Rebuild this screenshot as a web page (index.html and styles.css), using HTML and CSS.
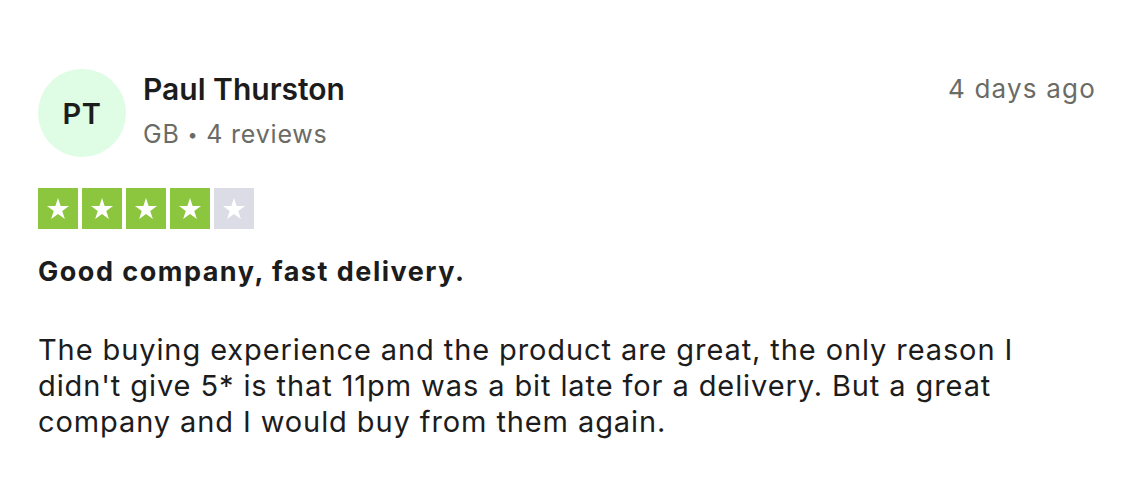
FILE: index.html
```html
<!DOCTYPE html>
<html lang="en">
<head>
<meta charset="utf-8">
<title>Review</title>
<link rel="stylesheet" href="styles.css">
</head>
<body>
<article class="review">
  <header class="review-header">
    <div class="consumer">
      <div class="avatar">PT</div>
      <div class="consumer-info">
        <div class="name">Paul Thurston</div>
        <div class="meta">GB <span class="dot">•</span> 4 reviews</div>
      </div>
    </div>
    <time class="date">4 days ago</time>
  </header>
  <div class="stars" aria-label="Rated 4 out of 5">
    <span class="star on"><svg viewBox="0 0 24 24"><path d="M12 3.2l2.1 6.4h6.7l-5.4 3.9 2.1 6.4-5.5-4-5.5 4 2.1-6.4-5.4-3.9h6.7z"/></svg></span>
    <span class="star on"><svg viewBox="0 0 24 24"><path d="M12 3.2l2.1 6.4h6.7l-5.4 3.9 2.1 6.4-5.5-4-5.5 4 2.1-6.4-5.4-3.9h6.7z"/></svg></span>
    <span class="star on"><svg viewBox="0 0 24 24"><path d="M12 3.2l2.1 6.4h6.7l-5.4 3.9 2.1 6.4-5.5-4-5.5 4 2.1-6.4-5.4-3.9h6.7z"/></svg></span>
    <span class="star on"><svg viewBox="0 0 24 24"><path d="M12 3.2l2.1 6.4h6.7l-5.4 3.9 2.1 6.4-5.5-4-5.5 4 2.1-6.4-5.4-3.9h6.7z"/></svg></span>
    <span class="star off"><svg viewBox="0 0 24 24"><path d="M12 3.2l2.1 6.4h6.7l-5.4 3.9 2.1 6.4-5.5-4-5.5 4 2.1-6.4-5.4-3.9h6.7z"/></svg></span>
  </div>
  <h2 class="title">Good company, fast delivery.</h2>
  <p class="text">The buying experience and the product are great, the only reason I didn't give 5* is that 11pm was a bit late for a delivery. But a great company and I would buy from them again.</p>
</article>
</body>
</html>
```

FILE: styles.css
```css
* { box-sizing: border-box; }
html, body { margin: 0; padding: 0; background: #ffffff; }
body {
  font-family: Inter, "Liberation Sans", sans-serif;
  color: #1c1c1c;
}
.review {
  padding: 69px 40px 0 38px;
}
.review-header {
  display: flex;
  justify-content: space-between;
  align-items: flex-start;
}
.consumer {
  display: flex;
  align-items: flex-start;
  gap: 17px;
}
.avatar {
  width: 88px;
  height: 88px;
  border-radius: 50%;
  background: #defde4;
  display: flex;
  align-items: center;
  justify-content: center;
  font-size: 29px;
  font-weight: 600;
  letter-spacing: 0.5px;
  color: #1c1c1c;
}
.consumer-info {
  padding-top: 2px;
}
.name {
  font-size: 30px;
  font-weight: 600;
  line-height: 36px;
  color: #1c1c1c;
}
.meta {
  margin-top: 12px;
  font-size: 25px;
  line-height: 30px;
  letter-spacing: 0.8px;
  color: #6b6b66;
}
.dot { font-size: 18px; vertical-align: 2px; }
.date {
  font-size: 26px;
  line-height: 30px;
  letter-spacing: 1.2px;
  color: #6b6b66;
  padding-top: 5px;
}
.stars {
  display: flex;
  gap: 4px;
  margin-top: 31px;
}
.star {
  width: 40px;
  height: 41px;
  display: flex;
  align-items: center;
  justify-content: center;
}
.star svg { width: 30px; height: 30px; fill: #ffffff; }
.star.on { background: #8cc63f; }
.star.off { background: #dcdce6; }
.title {
  margin: 26px 0 0;
  font-size: 27px;
  font-weight: 700;
  line-height: 34px;
  letter-spacing: 1.5px;
  color: #1c1c1c;
}
.text {
  margin: 43px 0 0;
  font-size: 29px;
  line-height: 36px;
  letter-spacing: 0.9px;
  font-weight: 400;
  color: #1c1c1c;
  max-width: 1040px;
}
```
